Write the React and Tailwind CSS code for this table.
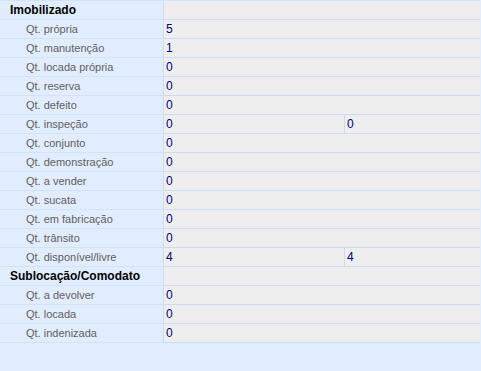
const rows = [
  { label: "Imobilizado", header: true },
  { label: "Qt. própria", value: "5" },
  { label: "Qt. manutenção", value: "1" },
  { label: "Qt. locada própria", value: "0" },
  { label: "Qt. reserva", value: "0" },
  { label: "Qt. defeito", value: "0" },
  { label: "Qt. inspeção", value: "0", extra: "0" },
  { label: "Qt. conjunto", value: "0" },
  { label: "Qt. demonstração", value: "0" },
  { label: "Qt. a vender", value: "0" },
  { label: "Qt. sucata", value: "0" },
  { label: "Qt. em fabricação", value: "0" },
  { label: "Qt. trânsito", value: "0" },
  { label: "Qt. disponível/livre", value: "4", extra: "4" },
  { label: "Sublocação/Comodato", header: true },
  { label: "Qt. a devolver", value: "0" },
  { label: "Qt. locada", value: "0" },
  { label: "Qt. indenizada", value: "0" },
];

function Row({ row }) {
  return (
    <div className="flex h-[19px] border-b border-[#d2e2f9]">
      <div
        className={
          "w-[164px] shrink-0 flex items-center border-r border-[#c8dcf8] " +
          (row.header ? "pl-[10px] font-bold text-black text-[12px]" : "pl-[26px] text-[#606060]")
        }
      >
        {row.label}
      </div>
      <div className="flex-1 flex bg-[#eeeeee] border-b border-[#c8dcf8] -mb-px">
        {row.extra !== undefined ? (
          <>
            <div className="w-[181px] flex items-center pl-[2px] text-[#00007a] text-[12px] border-r border-[#c8dcf8]">
              {row.value}
            </div>
            <div className="flex-1 flex items-center pl-[2px] text-[#00007a] text-[12px]">{row.extra}</div>
          </>
        ) : (
          <div className="flex-1 flex items-center pl-[2px] text-[#00007a] text-[12px]">{row.value}</div>
        )}
      </div>
    </div>
  );
}

export default function App() {
  return (
    <div
      className="w-[481px] h-[371px] bg-[#e1edfe] overflow-hidden text-[11px] leading-none"
      style={{ fontFamily: '"Liberation Sans", Arial, sans-serif' }}
    >
      <div className="border-t border-[#d2e2f9] w-[480px]">
        {rows.map((r) => (
          <Row key={r.label} row={r} />
        ))}
      </div>
    </div>
  );
}
